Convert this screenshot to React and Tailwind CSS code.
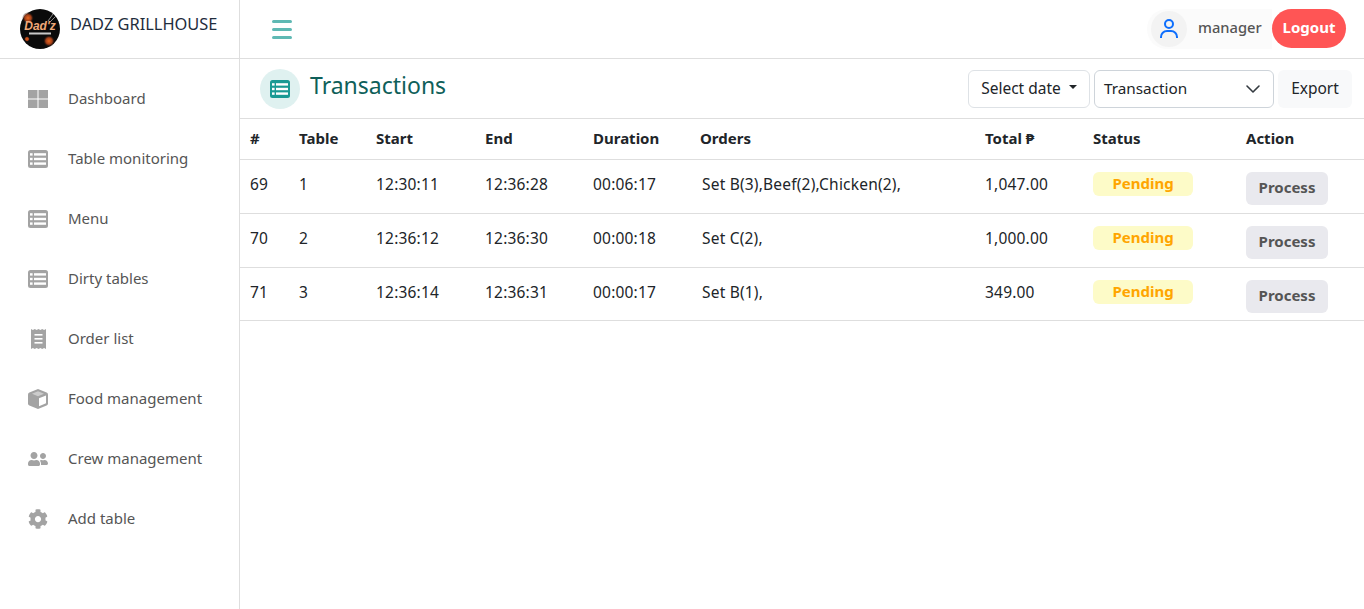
import React from 'react';
import { BiUser } from 'react-icons/bi';
import { FaUserFriends, FaCog } from 'react-icons/fa';

function TilesIcon({ className }) {
    return (
        <svg viewBox="0 0 20 18" className={className} fill="currentColor">
            <rect x="0" y="0" width="9.5" height="8.5" />
            <rect x="10.5" y="0" width="9.5" height="8.5" />
            <rect x="0" y="9.5" width="9.5" height="8.5" />
            <rect x="10.5" y="9.5" width="9.5" height="8.5" />
        </svg>
    );
}

function TableIcon({ className }) {
    return (
        <svg viewBox="0 0 20 18" className={className}>
            <rect x="0" y="0" width="20" height="18" rx="2.5" fill="currentColor" />
            <rect x="2" y="3.2" width="2.6" height="2.4" fill="#fff" />
            <rect x="6" y="3.2" width="12" height="2.4" fill="#fff" />
            <rect x="2" y="7.8" width="2.6" height="2.4" fill="#fff" />
            <rect x="6" y="7.8" width="12" height="2.4" fill="#fff" />
            <rect x="2" y="12.4" width="2.6" height="2.4" fill="#fff" />
            <rect x="6" y="12.4" width="12" height="2.4" fill="#fff" />
        </svg>
    );
}

// receipt with torn top and bottom edges
function ReceiptIcon({ className }) {
    return (
        <svg viewBox="0 0 15 20" className={className}>
            <path fill="currentColor" d="M0 0l1.9 1 1.9-1 1.8 1 1.9-1 1.9 1 1.8-1 1.9 1 1.9-1v20l-1.9-1-1.9 1-1.8-1-1.9 1-1.9-1-1.8 1-1.9-1-1.9 1z" />
            <rect x="3.5" y="5" width="8" height="1.6" fill="#fff" />
            <rect x="3.5" y="9" width="8" height="1.6" fill="#fff" />
            <rect x="3.5" y="13" width="8" height="1.6" fill="#fff" />
        </svg>
    );
}

function CubeIcon({ className }) {
    return (
        <svg viewBox="0 0 20 20" className={className}>
            <path fill="currentColor" d="M10 0l8.6 3.6q1.4.6 1.4 2v8.8q0 1.4-1.4 2L10 20l-8.6-3.6Q0 15.8 0 14.4V5.600q0-1.400 1.400-2z" />
            <path fill="#fff" d="M11 9.200l7-2.800v7.800l-7 3.100z" />
            <path fill="#fff" fillOpacity="0.45" d="M10 2.200l6 2.500-6 2.500-6-2.500z" />
        </svg>
    );
}

const navItems = [
    { label: 'Dashboard', icon: <TilesIcon className="w-5 h-[18px] shrink-0" /> },
    { label: 'Table monitoring', icon: <TableIcon className="w-5 h-[18px] shrink-0" /> },
    { label: 'Menu', icon: <TableIcon className="w-5 h-[18px] shrink-0" /> },
    { label: 'Dirty tables', icon: <TableIcon className="w-5 h-[18px] shrink-0" /> },
    { label: 'Order list', icon: <ReceiptIcon className="w-[15px] h-5 shrink-0" /> },
    { label: 'Food management', icon: <CubeIcon className="w-5 h-5 shrink-0" /> },
    { label: 'Crew management', icon: <FaUserFriends size={20} className="shrink-0" /> },
    { label: 'Add table', icon: <FaCog size={20} className="shrink-0" /> },
];

const rows = [
    { id: 69, table: 1, start: '12:30:11', end: '12:36:28', duration: '00:06:17', orders: 'Set B(3),Beef(2),Chicken(2),', total: '1,047.00' },
    { id: 70, table: 2, start: '12:36:12', end: '12:36:30', duration: '00:00:18', orders: 'Set C(2),', total: '1,000.00' },
    { id: 71, table: 3, start: '12:36:14', end: '12:36:31', duration: '00:00:17', orders: 'Set B(1),', total: '349.00' },
];

const cols = 'grid grid-cols-[49px_77px_109px_108px_107px_285px_108px_153px_1fr] pl-2.5';
const cell = 'leading-6 text-[15.5px] tracking-[0.2px]';

function Logo() {
    return (
        <svg viewBox="0 0 40 40" className="w-10 h-10 shrink-0">
            <defs>
                <radialGradient id="flare">
                    <stop offset="0%" stopColor="#e8651c" />
                    <stop offset="55%" stopColor="#9c3c18" />
                    <stop offset="100%" stopColor="#0a0a0a" stopOpacity="0" />
                </radialGradient>
            </defs>
            <circle cx="20" cy="20" r="20" fill="#0a0a0a" />
            <circle cx="8" cy="9" r="6" fill="url(#flare)" />
            <circle cx="29" cy="32" r="6" fill="url(#flare)" />
            <circle cx="7" cy="30" r="3" fill="url(#flare)" />
            <path d="M28 12 L33 5 M30 13 L36 7" stroke="#888" strokeWidth="1" />
            <text x="20" y="21" textAnchor="middle" fontSize="12" fontWeight="700" fontStyle="italic" fill="#f0a878" fontFamily="'Liberation Sans', sans-serif">Dad'z</text>
            <rect x="9" y="23.500" width="22" height="2" fill="#c8c8c8" />
        </svg>
    );
}

export default function App() {
    return (
        <div className="flex h-[609px] overflow-hidden bg-white font-['Noto_Sans',sans-serif] text-[15px] text-[#212529]">
            <aside className="w-[240px] shrink-0 border-r border-[#dedede]">
                <div className="h-[59px] border-b border-[#dedede] flex items-start pl-5 pt-[9px] gap-2.5">
                    <Logo />
                    <span className="text-[#1f2d3d] text-[16.4px] leading-[30px] whitespace-nowrap">DADZ GRILLHOUSE</span>
                </div>
                <nav className="pt-2.5">
                    {navItems.map(item => (
                        <div key={item.label} className="h-[60px] flex items-center pl-7 text-[#555]">
                            <span className="w-5 h-6 flex items-center justify-center text-[#a3a3a3] mr-5">{item.icon}</span>
                            <span className="whitespace-nowrap pb-0.5">{item.label}</span>
                        </div>
                    ))}
                </nav>
            </aside>

            <main className="flex-1 min-w-0">
                <header className="h-[59px] border-b border-[#dedede] flex items-center justify-between pl-8 pr-[18px]">
                    <div className="w-5 flex flex-col gap-[5px]">
                        <span className="h-[3px] rounded-full bg-[#5fb9b4]" />
                        <span className="h-[3px] rounded-full bg-[#5fb9b4]" />
                        <span className="h-[3px] rounded-full bg-[#5fb9b4]" />
                    </div>
                    <div className="flex items-center -mt-px">
                        <div className="flex items-center h-10 w-[125px] rounded-l-full bg-[#fbfbfb] pl-1">
                            <span className="w-9 h-9 rounded-full bg-[#f3f3f3] flex items-center justify-center text-[#0d6efd]">
                                <BiUser size={24} />
                            </span>
                            <span className="ml-[11px] pb-0.5 text-[14.7px] text-[#555] font-medium">manager</span>
                        </div>
                        <button className="w-[74px] h-[39px] pb-0.5 rounded-full bg-[#ff5555] text-white font-bold">Logout</button>
                    </div>
                </header>

                <div className="h-[60px] border-b border-[#dedede] flex items-center justify-between pl-5 pr-3">
                    <div className="flex items-center gap-2.5">
                        <span className="w-10 h-10 rounded-full bg-[#dff1f0] flex items-center justify-center text-[#1a9a94]">
                            <TableIcon className="w-5 h-[18px]" />
                        </span>
                        <h1 className="text-[23px] text-[#0f5f5a] -mt-1.5">Transactions</h1>
                    </div>
                    <div className="flex items-center gap-1">
                        <button className="w-[122px] h-[38px] rounded-md border border-[#dee2e6] flex items-center justify-center gap-2 text-[15.5px]">
                            Select date
                            <span className="w-0 h-0 border-x-[4px] border-x-transparent border-t-[4px] border-t-[#212529] -mt-1" />
                        </button>
                        <div className="w-[180px] h-[38px] rounded-md border border-[#ced4da] flex items-center justify-between pl-[9px] pr-3 text-[15.3px]">
                            Transaction
                            <svg viewBox="0 0 16 16" className="w-4 h-4" fill="none" stroke="#343a40" strokeWidth="1.600" strokeLinecap="round" strokeLinejoin="round">
                                <path d="m2 5 6 6 6-6" />
                            </svg>
                        </div>
                        <button className="w-[74px] h-[38px] rounded-md bg-[#f8f9fa] text-[15.5px]">Export</button>
                    </div>
                </div>

                <div className={`${cols} h-[41px] pb-0.5 items-center border-b border-[#dedede] font-bold`}>
                    <span>#</span>
                    <span>Table</span>
                    <span>Start</span>
                    <span>End</span>
                    <span>Duration</span>
                    <span>Orders</span>
                    <span>Total ₱</span>
                    <span>Status</span>
                    <span>Action</span>
                </div>
                {rows.map(row => (
                    <div key={row.id} className={`${cols} h-[54px] last:h-[53px] border-b border-[#dedede] pt-3`}>
                        <span className={cell}>{row.id}</span>
                        <span className={cell}>{row.table}</span>
                        <span className={cell}>{row.start}</span>
                        <span className={cell}>{row.end}</span>
                        <span className={cell}>{row.duration}</span>
                        <span className={`${cell} pl-0.5`}>{row.orders}</span>
                        <span className={cell}>{row.total}</span>
                        <span className="w-[100px] h-6 rounded-md bg-[#fdfbc8] text-[#ffa500] font-bold text-center leading-[22px]">Pending</span>
                        <button className="w-[82px] h-[33px] pb-0.5 rounded-md bg-[#e9e9ee] text-[#555] font-bold">Process</button>
                    </div>
                ))}
            </main>
        </div>
    );
}
